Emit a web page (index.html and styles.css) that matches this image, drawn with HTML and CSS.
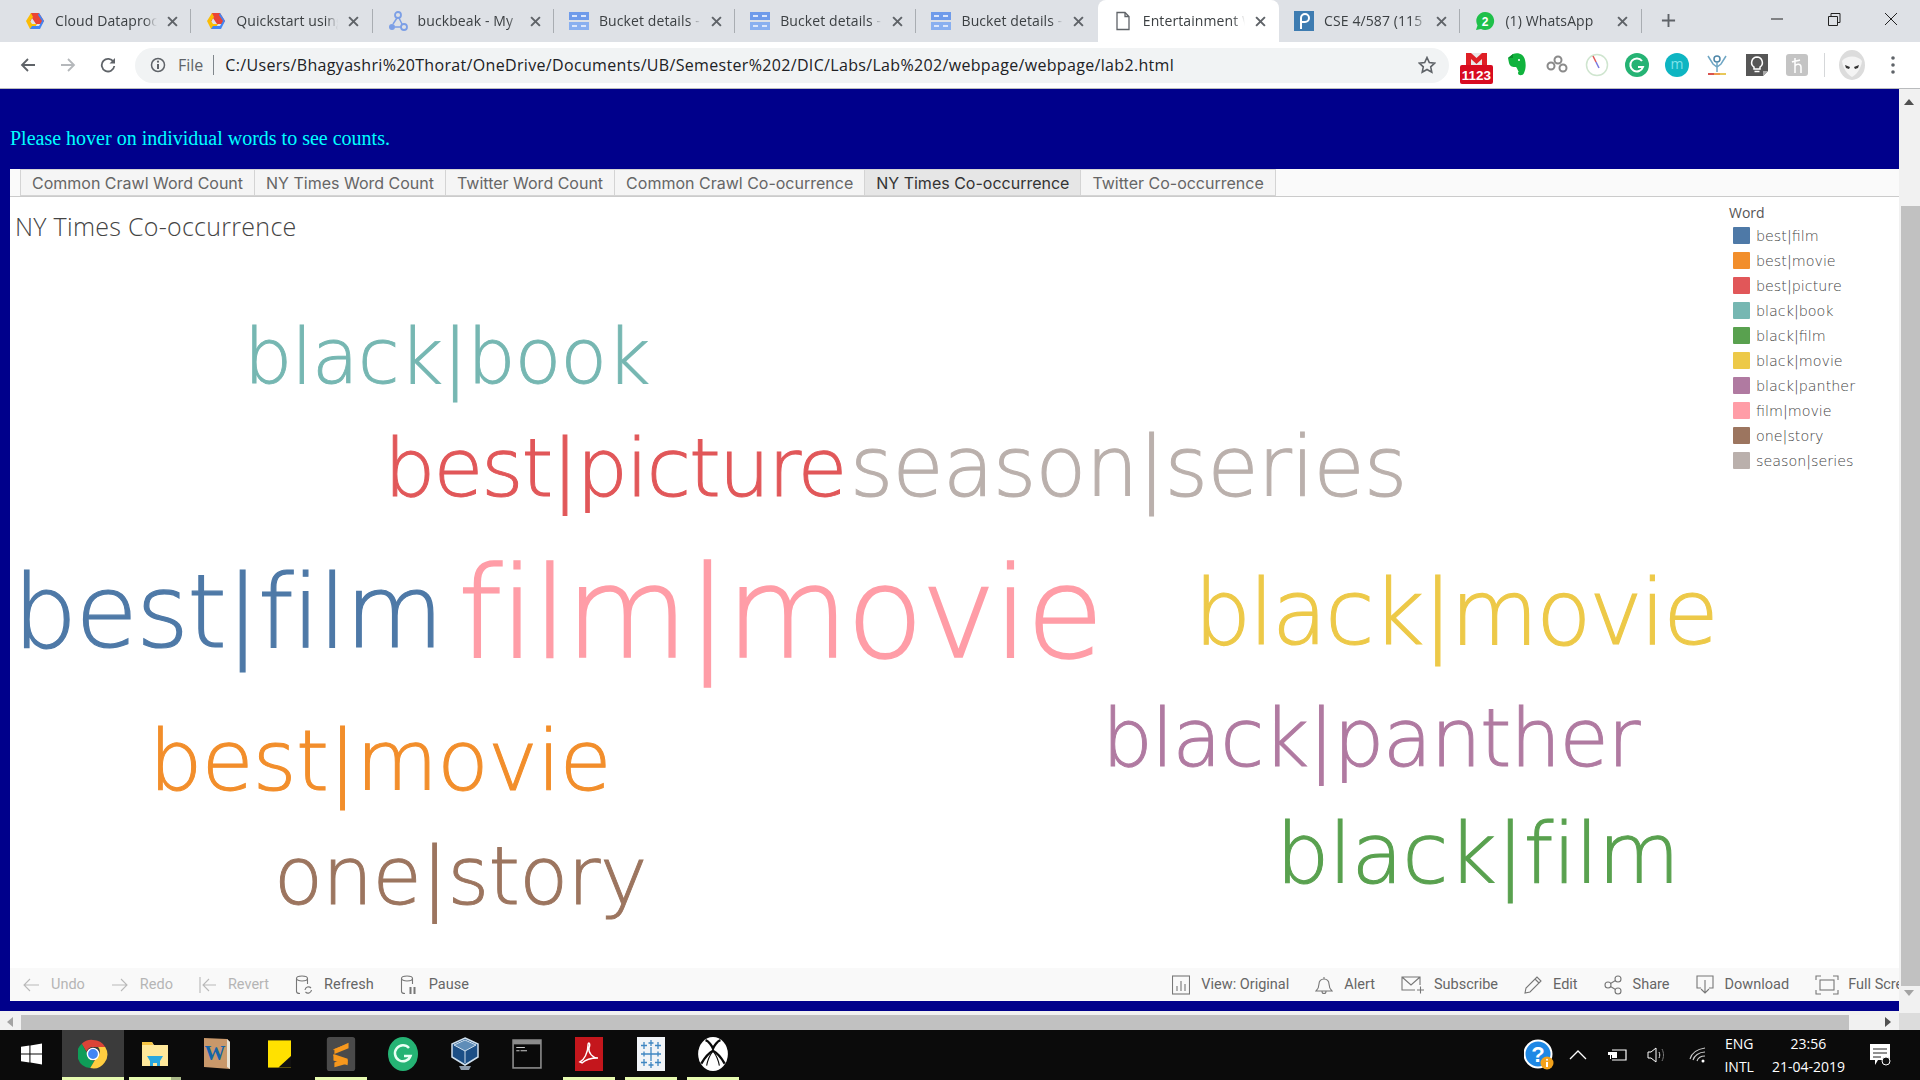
FILE: index.html
```html
<!DOCTYPE html>
<html lang="en">
<head>
    <meta charset="UTF-8">
    <title>Entertainment Word Counts</title>
    <link rel="stylesheet" href="styles.css">
</head>
<body>
    <svg class="defs" width="0" height="0">
        <symbol id="gcloud" viewBox="0 0 20 20">
            <path d="M6 2h8l5 8-2 3H11L7 7l-3 6-1 0z" fill="#ea4335"/>
            <path d="M6 2 1 10l4 8h4l3-5H7L5 10l3-4z" fill="#fbbc05"/>
            <path d="M14 2l5 8-4 8H5l2-3h7l3-5-4-6z" fill="#4285f4"/>
        </symbol>
        <symbol id="bucket" viewBox="0 0 20 20">
            <rect x="0" y="1" width="20" height="8" fill="#6f9bea"/>
            <rect x="0" y="11" width="20" height="8" fill="#8ab0f0"/>
            <rect x="3" y="4" width="5" height="2" fill="#dbe6fb"/>
            <rect x="12" y="4" width="5" height="2" fill="#dbe6fb"/>
            <rect x="3" y="14" width="5" height="2" fill="#dbe6fb"/>
            <rect x="12" y="14" width="5" height="2" fill="#dbe6fb"/>
        </symbol>
        <symbol id="close" viewBox="0 0 10 10">
            <path d="M1 1l8 8M9 1l-8 8" stroke="#5f6368" stroke-width="1.8" fill="none"/>
        </symbol>
    </svg>

    <div class="tabstrip">
        <div class="tab">
            <svg class="favicon"><use href="#gcloud"/></svg>
            <span class="tab-title">Cloud Dataproc</span>
            <svg class="tab-close"><use href="#close"/></svg>
        </div>
        <div class="tab">
            <svg class="favicon"><use href="#gcloud"/></svg>
            <span class="tab-title">Quickstart using</span>
            <svg class="tab-close"><use href="#close"/></svg>
        </div>
        <div class="tab">
            <svg class="favicon" viewBox="0 0 20 20">
                <circle cx="10" cy="4" r="3" fill="none" stroke="#7c9fe6" stroke-width="1.8"/>
                <circle cx="4" cy="16" r="3" fill="#7c9fe6"/>
                <circle cx="16" cy="16" r="3" fill="none" stroke="#7c9fe6" stroke-width="1.8"/>
                <path d="M9 7l-4 6M11 7l3 6M7 16h6" stroke="#7c9fe6" stroke-width="1.5"/>
            </svg>
            <span class="tab-title">buckbeak - My</span>
            <svg class="tab-close"><use href="#close"/></svg>
        </div>
        <div class="tab">
            <svg class="favicon"><use href="#bucket"/></svg>
            <span class="tab-title">Bucket details -</span>
            <svg class="tab-close"><use href="#close"/></svg>
        </div>
        <div class="tab">
            <svg class="favicon"><use href="#bucket"/></svg>
            <span class="tab-title">Bucket details -</span>
            <svg class="tab-close"><use href="#close"/></svg>
        </div>
        <div class="tab tab-plain">
            <svg class="favicon"><use href="#bucket"/></svg>
            <span class="tab-title">Bucket details -</span>
            <svg class="tab-close"><use href="#close"/></svg>
        </div>
        <div class="tab tab-plain tab-active">
            <svg class="favicon" viewBox="0 0 20 20">
                <path d="M4 1.5h8l4 4v13H4z M12 1.5v4h4" fill="#fff" stroke="#5f6368" stroke-width="1.3"/>
            </svg>
            <span class="tab-title">Entertainment Word</span>
            <svg class="tab-close"><use href="#close"/></svg>
        </div>
        <div class="tab">
            <svg class="favicon" viewBox="0 0 20 20">
                <rect width="20" height="20" fill="#3e7cb1"/>
                <path d="M7 18V7a4 4 0 1 1 4 4H7" fill="none" stroke="#fff" stroke-width="2"/>
            </svg>
            <span class="tab-title">CSE 4/587 (115</span>
            <svg class="tab-close"><use href="#close"/></svg>
        </div>
        <div class="tab">
            <svg class="favicon" viewBox="0 0 20 20">
                <path d="M10 1a9 9 0 1 1-4 17l-5 1 1.500-4.500A9 9 0 0 1 10 1z" fill="#1fc04a"/>
                <text x="10" y="14.500" class="fav-num">2</text>
            </svg>
            <span class="tab-title">(1) WhatsApp</span>
            <svg class="tab-close"><use href="#close"/></svg>
        </div>
        <svg class="newtab" viewBox="0 0 16 16"><path d="M8 1v14M1 8h14" stroke="#5f6368" stroke-width="2"/></svg>
        <div class="winbtns">
            <svg viewBox="0 0 14 14"><path d="M1 7h12" stroke="#222" fill="none"/></svg>
            <svg viewBox="0 0 14 14"><path d="M1.500 4.500h9v9h-9zM4 4.500v-3h9v9h-2.500" stroke="#222" fill="none"/></svg>
            <svg viewBox="0 0 14 14"><path d="M1 1l12 12M13 1l-12 12" stroke="#222" fill="none"/></svg>
        </div>
    </div>

    <div class="toolbar">
        <svg class="nav-icon" viewBox="0 0 16 16"><path d="M15 8H2M8 2 2 8l6 6" fill="none" stroke="#5f6368" stroke-width="1.8"/></svg>
        <svg class="nav-icon nav-forward" viewBox="0 0 16 16"><path d="M1 8h13M8 2l6 6-6 6" fill="none" stroke="#b5b8bb" stroke-width="1.8"/></svg>
        <svg class="nav-icon nav-reload" viewBox="0 0 16 16"><path d="M13.500 5A6.300 6.300 0 1 0 14.300 9" fill="none" stroke="#5f6368" stroke-width="1.8"/><path d="M15 1v5.500H9.500z" fill="#5f6368"/></svg>
        <div class="omnibox">
            <svg class="info" viewBox="0 0 16 16"><circle cx="8" cy="8" r="6.500" fill="none" stroke="#5f6368" stroke-width="1.500"/><path d="M8 7v5" stroke="#5f6368" stroke-width="2"/><circle cx="8" cy="4.700" r="1.100" fill="#5f6368"/></svg>
            <span class="scheme">File</span>
            <span class="omni-sep"></span>
            <span class="url">C:/Users/Bhagyashri%20Thorat/OneDrive/Documents/UB/Semester%202/DIC/Labs/Lab%202/webpage/webpage/lab2.html</span>
            <svg class="star" viewBox="0 0 18 18"><path d="M9 1.500l2.300 5 5.400.6-4 3.700 1.100 5.400L9 13.500l-4.800 2.700 1.100-5.400-4-3.700 5.400-.6z" fill="none" stroke="#5f6368" stroke-width="1.600"/></svg>
        </div>
        <div class="extensions">
            <svg class="ext ext-gmail" viewBox="0 0 33 32">
                <path d="M7 1h19v12H7z" fill="#e8e8e8"/>
                <path d="M6 1h5l5.500 5L22 1h5v12h-5V7l-5.500 5L11 7v6H6z" fill="#df1f26"/>
                <rect y="13" width="33" height="19" rx="2" fill="#d80b20"/>
                <text x="16.500" y="28" class="ext-count">1123</text>
            </svg>
            <svg class="ext" viewBox="0 0 24 24">
                <path d="M3 5l5-4c6-2 11 1 12 6 1 4 1 9-1 13-1 3-6 3-6 0 0-2 3-2 3 0-3 0-3-4-5-6-3 0-6 0-7-4z" fill="#10b33d"/>
                <path d="M3 5h5V1z" fill="#0b8a2e"/>
                <circle cx="14" cy="7" r="1" fill="#fff"/>
            </svg>
            <svg class="ext" viewBox="0 0 24 24" fill="none" stroke="#8a8a8a" stroke-width="2">
                <circle cx="13" cy="7" r="3.500"/><circle cx="6" cy="13" r="3.500"/><circle cx="18" cy="15" r="3.500"/>
            </svg>
            <svg class="ext" viewBox="0 0 24 24" fill="none">
                <circle cx="12" cy="12" r="10.500" stroke="#cfe5cf" stroke-width="1.500"/>
                <path d="M8 3l3 6" stroke="#e05a5a" stroke-width="1.500"/><path d="M11 9l3 6" stroke="#7a7ae0" stroke-width="1.500"/>
            </svg>
            <svg class="ext" viewBox="0 0 24 24">
                <circle cx="12" cy="12" r="12" fill="#25b374"/>
                <path d="M17 8a6.500 6.500 0 1 0 1 6h-5" fill="none" stroke="#fff" stroke-width="2"/>
            </svg>
            <svg class="ext" viewBox="0 0 24 24">
                <circle cx="12" cy="12" r="12" fill="#0eb5c2"/>
                <text x="12" y="16" class="ext-m">m</text>
            </svg>
            <svg class="ext" viewBox="0 0 24 24" fill="none">
                <circle cx="12" cy="6" r="3" stroke="#4d86a8" stroke-width="1.500"/>
                <path d="M12 9v10M3 3l5 8 4 3 4-3 5-8" stroke="#6fa6c4" stroke-width="1.500"/>
                <path d="M3 21h6" stroke="#d9534f" stroke-width="2"/><path d="M9 21h6" stroke="#ee9a4d" stroke-width="2"/><path d="M15 21h6" stroke="#e8c85a" stroke-width="2"/>
            </svg>
            <svg class="ext" viewBox="0 0 24 24">
                <path d="M1 1h22v17l-5 5H1z" fill="#565656"/>
                <path d="M18 23v-5h5z" fill="#aaa"/>
                <path d="M12 4a5.500 5.500 0 0 0-3 10v2h6v-2a5.500 5.500 0 0 0-3-10z" fill="none" stroke="#fff" stroke-width="1.500"/>
                <path d="M9.500 18.500h5" stroke="#fff" stroke-width="1.500"/>
            </svg>
            <svg class="ext" viewBox="0 0 24 24">
                <rect x="1" y="1" width="22" height="22" rx="3" fill="#c4c4c4"/>
                <path d="M10 5v15M10 13c2-3 6-2 6 1v6M7 9c2-1 5-1 8-2" fill="none" stroke="#fff" stroke-width="1.500"/>
            </svg>
            <span class="ext-sep"></span>
            <svg class="avatar" viewBox="0 0 26 30">
                <ellipse cx="13" cy="15" rx="13" ry="15" fill="#dcdcdc"/>
                <path d="M3 11c4-6 16-6 20 0-1 8-6 14-10 16C9 25 4 19 3 11z" fill="#f4f4f4"/>
                <path d="M6 15l5 2-1 2-3-1zM20 15l-5 2 1 2 3-1z" fill="#333"/>
            </svg>
            <svg class="menu-dots" viewBox="0 0 4 18"><circle cx="2" cy="2" r="1.800" fill="#5f6368"/><circle cx="2" cy="9" r="1.800" fill="#5f6368"/><circle cx="2" cy="16" r="1.800" fill="#5f6368"/></svg>
        </div>
    </div>

    <div class="window">
        <div class="page-row">
            <main class="page">
                <p class="hint">Please hover on individual words to see counts.</p>
                <div class="viz">
                    <div class="sheet-tabs">
                        <span class="sheet-tab">Common Crawl Word Count</span>
                        <span class="sheet-tab">NY Times Word Count</span>
                        <span class="sheet-tab">Twitter Word Count</span>
                        <span class="sheet-tab">Common Crawl Co-ocurrence</span>
                        <span class="sheet-tab sheet-tab-on">NY Times Co-occurrence</span>
                        <span class="sheet-tab">Twitter Co-occurrence</span>
                    </div>
                    <div class="viz-body">
                        <div class="canvas">
                            <h2 class="viz-title">NY Times Co-occurrence</h2>
                            <span class="word w-black-book">black|book</span>
                            <span class="word w-best-picture">best|picture</span>
                            <span class="word w-season-series">season|series</span>
                            <span class="word w-best-film">best|film</span>
                            <span class="word w-film-movie">film|movie</span>
                            <span class="word w-black-movie">black|movie</span>
                            <span class="word w-best-movie">best|movie</span>
                            <span class="word w-black-panther">black|panther</span>
                            <span class="word w-one-story">one|story</span>
                            <span class="word w-black-film">black|film</span>
                        </div>
                        <aside class="legend">
                            <div class="legend-title">Word</div>
                            <div class="legend-row"><span class="swatch c1"></span>best|film</div>
                            <div class="legend-row"><span class="swatch c2"></span>best|movie</div>
                            <div class="legend-row"><span class="swatch c3"></span>best|picture</div>
                            <div class="legend-row"><span class="swatch c4"></span>black|book</div>
                            <div class="legend-row"><span class="swatch c5"></span>black|film</div>
                            <div class="legend-row"><span class="swatch c6"></span>black|movie</div>
                            <div class="legend-row"><span class="swatch c7"></span>black|panther</div>
                            <div class="legend-row"><span class="swatch c8"></span>film|movie</div>
                            <div class="legend-row"><span class="swatch c9"></span>one|story</div>
                            <div class="legend-row"><span class="swatch c10"></span>season|series</div>
                        </aside>
                    </div>
                    <div class="viz-toolbar">
                        <span class="tb-item tb-off">
                            <svg viewBox="0 0 18 18"><path d="M17 9H2M8 3 2 9l6 6" /></svg>Undo
                        </span>
                        <span class="tb-item tb-off">
                            <svg viewBox="0 0 18 18"><path d="M1 9h15M10 3l6 6-6 6" /></svg>Redo
                        </span>
                        <span class="tb-item tb-off">
                            <svg viewBox="0 0 18 18"><path d="M1 1v16M17 9H4M10 3 4 9l6 6" /></svg>Revert
                        </span>
                        <span class="tb-item">
                            <svg viewBox="0 0 18 20"><ellipse cx="7" cy="3.500" rx="5.500" ry="2.500"/><path d="M1.500 3.500v13c0 1 1.500 2 3.500 2M12.500 3.500V9"/><path d="M10 15a3.500 3.500 0 0 1 6-2M16.500 15a3.500 3.500 0 0 1-6 2"/></svg>Refresh
                        </span>
                        <span class="tb-item">
                            <svg viewBox="0 0 18 20"><ellipse cx="7" cy="3.500" rx="5.500" ry="2.500"/><path d="M1.500 3.500v13c0 1 1.500 2 3.500 2M12.500 3.500V9"/><path d="M10.500 12v7M14.500 12v7" stroke-width="2"/></svg>Pause
                        </span>
                        <span class="tb-spacer"></span>
                        <span class="tb-item">
                            <svg viewBox="0 0 18 20"><rect x="0.500" y="1" width="17" height="18"/><path d="M5 16v-5M9 16V6M13 16V9"/></svg>View: Original
                        </span>
                        <span class="tb-item">
                            <svg viewBox="0 0 18 20"><path d="M1 16c2-2 3-3 3-7 0-3 2-5 5-5s5 2 5 5c0 4 1 5 3 7zM7 16.500a2 2 0 0 0 4 0M9 4V2"/></svg>Alert
                        </span>
                        <span class="tb-item tb-wide">
                            <svg viewBox="0 0 24 20"><path d="M14 15H1V2h18v8M1 2l9 8 9-8M16 15h7M19.500 11.500v7" /></svg>Subscribe
                        </span>
                        <span class="tb-item">
                            <svg viewBox="0 0 18 20"><path d="M1 18l1-5L13 2l4 4L6 17zM11 4l4 4"/></svg>Edit
                        </span>
                        <span class="tb-item">
                            <svg viewBox="0 0 18 20"><circle cx="4" cy="10" r="3"/><circle cx="14" cy="4" r="3"/><circle cx="14" cy="16" r="3"/><path d="M6.500 8.500l5-3M6.500 11.500l5 3"/></svg>Share
                        </span>
                        <span class="tb-item">
                            <svg viewBox="0 0 18 20"><path d="M5 13H1V1h16v12h-4M9 5v13M5 14l4 4 4-4"/></svg>Download
                        </span>
                        <span class="tb-item tb-wide tb-last">
                            <svg viewBox="0 0 24 20"><rect x="5" y="5" width="14" height="10"/><path d="M1 5V1h5M18 1h5v4M1 15v4h5M18 19h5v-4"/></svg>Full Screen
                        </span>
                    </div>
                </div>
            </main>
            <div class="vscroll">
                <span class="arrow-up"></span>
                <div class="vthumb"></div>
                <span class="arrow-down"></span>
            </div>
        </div>
        <div class="hscroll">
            <span class="arrow-left"></span>
            <div class="hthumb"></div>
            <span class="arrow-right"></span>
            <span class="corner"></span>
        </div>
    </div>

    <footer class="taskbar">
        <div class="task-cell">
            <svg class="task-icon task-win" viewBox="0 0 20 20"><path d="M0 3l8-1v7.500H0zM9 1.800 20 0v9.500H9zM0 10.500h8V18l-8-1zM9 10.500h11V20L9 18.200z" fill="#fff"/></svg>
        </div>
        <div class="task-cell task-on">
            <svg class="task-icon" viewBox="0 0 32 32">
                <path d="M16 1a15 15 0 0 1 13 7.500H16a7.500 7.500 0 0 0-7 5L4 5a15 15 0 0 1 12-4z" fill="#db4437"/>
                <path d="M4 5l6.500 11.500a7.500 7.500 0 0 0 7 7L13 31A15 15 0 0 1 4 5z" fill="#0f9d58"/>
                <path d="M29 8.500A15 15 0 0 1 13 31l6.500-11a7.500 7.500 0 0 0 2-11.500z" fill="#ffcd40"/>
                <circle cx="16" cy="16" r="6" fill="#4285f4" stroke="#fff" stroke-width="1.500"/>
            </svg>
        </div>
        <div class="task-cell run run-stack">
            <svg class="task-icon" viewBox="0 0 30 30">
                <path d="M2 3h10l2 3h14v21H2z" fill="#ffe89a"/>
                <path d="M2 3h10l1 3H2z" fill="#f6c544"/>
                <path d="M10 21h10v6h-3v-3h-4v3h-3z" fill="#29a8e0"/><path d="M7 17h16l-3 5H10z" fill="#29a8e0"/>
            </svg>
        </div>
        <div class="task-cell">
            <svg class="task-icon" viewBox="0 0 30 34">
                <path d="M2 1l23 1 3 3v27L2 30z" fill="#c9986a"/>
                <path d="M25 2l3 3v27l-3-2z" fill="#e8e2d2"/>
                <text x="13" y="23" class="task-w">W</text>
            </svg>
        </div>
        <div class="task-cell">
            <svg class="task-icon task-note" viewBox="0 0 22 26">
                <rect width="22" height="26" fill="#ffe100"/>
                <path d="M22 15v11H10z" fill="#111"/>
            </svg>
        </div>
        <div class="task-cell run">
            <svg class="task-icon" viewBox="0 0 30 36">
                <rect width="30" height="36" rx="3" fill="#4a4a4a"/>
                <path d="M23 7 7 13v5l15 5v5L8 32l0-5 8-3-9-4v-6l16-7z" fill="#f7981d"/>
                <path d="M23 6v6L8 18v-5zM7 19l15 5v6L7 25z" fill="#f7981d"/>
            </svg>
        </div>
        <div class="task-cell">
            <svg class="task-icon" viewBox="0 0 30 34">
                <ellipse cx="15" cy="17" rx="15" ry="17" fill="#25b374"/>
                <path d="M21 11a8 8 0 1 0 1.500 8H16" fill="none" stroke="#e9fff4" stroke-width="2.500"/>
            </svg>
        </div>
        <div class="task-cell">
            <svg class="task-icon" viewBox="0 0 28 34">
                <path d="M14 1l13 6v13l-13 8L1 20V7z" fill="#1c4f86" stroke="#cfe0ee" stroke-width="1.500"/>
                <path d="M14 14 3 8l11-5 11 5zM14 14v12" fill="#5f8db8" stroke="#cfe0ee"/>
                <path d="M8 29h12l-2 4h-8z" fill="#8d9bab"/>
            </svg>
        </div>
        <div class="task-cell">
            <svg class="task-icon" viewBox="0 0 28 28">
                <rect x="1" y="1" width="26" height="26" fill="#0a0a0a" stroke="#8c8c8c" stroke-width="1.500"/>
                <rect x="1" y="1" width="26" height="4" fill="#8c8c8c"/>
                <path d="M4 8h8M4 11h3M8 11h6" stroke="#ccc"/>
            </svg>
        </div>
        <div class="task-cell run">
            <svg class="task-icon" viewBox="0 0 28 34">
                <rect width="28" height="34" fill="#c4161c"/>
                <path d="M5 25c4-2 8-9 8-17 0-4 3-2 1 3-1 5 4 10 9 10-5 0-12 1-16 5z" fill="none" stroke="#fff" stroke-width="1.400"/>
            </svg>
        </div>
        <div class="task-cell run">
            <svg class="task-icon task-tableau" viewBox="0 0 28 34">
                <rect width="28" height="34" fill="#f1f4f7"/>
                <path d="M14 10v14M8 17h12M14 3v6M11.500 6h5M14 25v6M11.500 28h5M4 17h6M18 17h6M7 14.500v5M21 14.500v5M7 5v7M4 8.500h6M21 5v7M18 8.500h6M7 22v7M4 25.500h6M21 22v7M18 25.500h6" stroke="#3f87c2" stroke-width="1.300" fill="none"/>
            </svg>
        </div>
        <div class="task-cell run">
            <svg class="task-icon" viewBox="0 0 28 32">
                <ellipse cx="14" cy="16" rx="14" ry="16" fill="#fff"/>
                <path d="M7 3c3 1 6 5 7 8 1-3 4-7 7-8M3 25c3-5 7-10 11-12 4 2 8 7 11 12" fill="none" stroke="#0a0a0a" stroke-width="2.200"/>
                <path d="M14 13c-3 4-5 8-6 14M14 13c3 4 5 8 6 14" fill="none" stroke="#0a0a0a" stroke-width="1"/>
            </svg>
        </div>
        <div class="tray">
            <svg class="tray-help" viewBox="0 0 30 32">
                <circle cx="14" cy="15" r="13.500" fill="#1e88e5" stroke="#fff" stroke-width="2"/>
                <text x="14" y="23" class="tray-q">?</text>
                <circle cx="23" cy="24" r="6.500" fill="#f3a21b"/>
                <path d="M23 23v5" stroke="#fff" stroke-width="2"/><circle cx="23" cy="20.800" r="1" fill="#fff"/>
            </svg>
            <svg class="tray-chev" viewBox="0 0 18 10"><path d="M1 9l8-8 8 8" fill="none" stroke="#fff" stroke-width="1.300"/></svg>
            <svg class="tray-batt" viewBox="0 0 20 14"><path d="M5 2h14v10H5" fill="none" stroke="#fff" stroke-width="1.200"/><rect x="5" y="4" width="5" height="6" fill="#fff"/><path d="M1 4h5v3H4v4H3V7H1z" fill="#fff"/></svg>
            <svg class="tray-sound" viewBox="0 0 20 18"><path d="M1 6h3l5-4v14l-5-4H1z" fill="none" stroke="#fff"/><path d="M12 6c1 2 1 4 0 6" stroke="#ddd" fill="none"/><path d="M15 3c2 4 2 8 0 12" stroke="#777" fill="none"/></svg>
            <svg class="tray-wifi" viewBox="0 0 18 18"><path d="M1 13C3 6 9 3 16 2M4 14c1-4 6-8 12-8M8 15c1-3 4-5 8-5" fill="none" stroke="#ccc" stroke-width="1.100"/><circle cx="14" cy="15" r="1.500" fill="#fff"/></svg>
            <div class="tray-lang"><span>ENG</span><span>INTL</span></div>
            <div class="tray-clock"><span>23:56</span><span>21-04-2019</span></div>
            <svg class="tray-notify" viewBox="0 0 22 24"><path d="M1 1h20v16H9l-3 5v-5H1z" fill="#fff"/><path d="M4 6h14M4 10h14M4 14h8" stroke="#222"/><circle cx="17" cy="18" r="4" fill="#111" stroke="#fff"/></svg>
        </div>
    </footer>
</body>
</html>
```

FILE: styles.css
```css
* {
    box-sizing: border-box;
}

html, body {
    height: 100%;
}

body {
    margin: 0;
    width: 1920px;
    height: 1080px;
    overflow: hidden;
    display: flex;
    flex-direction: column;
    font-family: "Open Sans", sans-serif;
    background-color: #fff;
}

.defs {
    position: absolute;
}

/* browser tabs */
.tabstrip {
    height: 42px;
    flex: none;
    display: flex;
    align-items: flex-start;
    background-color: #dee1e6;
    padding-left: 10px;
}

.tab {
    width: 181.300px;
    height: 42px;
    padding: 9px 12px 0 15px;
    display: flex;
    align-items: flex-start;
    position: relative;
}

.tab::after {
    content: "";
    position: absolute;
    top: 9px;
    right: 0;
    width: 1px;
    height: 24px;
    background-color: #a9adb2;
}

.tab-plain::after {
    display: none;
}

.tab-active {
    background-color: #fff;
    border-radius: 8px 8px 0 0;
}

.favicon {
    width: 20px;
    height: 20px;
    flex: none;
    margin-top: 2px;
}

.tab-title {
    margin-left: 10px;
    width: 102px;
    flex: none;
    overflow: hidden;
    white-space: nowrap;
    font-size: 14px;
    line-height: 24px;
    letter-spacing: 0.1px;
    color: #3c4043;
    -webkit-mask-image: linear-gradient(to right, #000 88%, transparent 100%);
    mask-image: linear-gradient(to right, #000 88%, transparent 100%);
}

.tab-close {
    width: 11px;
    height: 11px;
    flex: none;
    margin: 7px 0 0 10px;
}

.newtab {
    width: 15px;
    height: 15px;
    margin: 13px 0 0 19px;
    flex: none;
}

.winbtns {
    margin-left: auto;
    display: flex;
    gap: 43px;
    padding: 12px 22px 0 0;
}

.winbtns svg {
    width: 14px;
    height: 14px;
}

/* address bar */
.toolbar {
    height: 47px;
    flex: none;
    display: flex;
    align-items: center;
    padding-left: 20px;
    background-color: #fff;
    border-bottom: 1px solid #b9bbbd;
}

.nav-icon {
    width: 16px;
    height: 16px;
    flex: none;
    margin-right: 24px;
}

.nav-reload {
    margin-right: 19px;
}

.omnibox {
    width: 1314px;
    height: 35px;
    flex: none;
    display: flex;
    align-items: center;
    padding: 0 13px 0 15px;
    border-radius: 18px;
    background-color: #f1f3f4;
}

.info {
    width: 16px;
    height: 16px;
    flex: none;
}

.scheme {
    margin-left: 12px;
    font-size: 16px;
    color: #5f6368;
}

.omni-sep {
    width: 1px;
    height: 20px;
    margin: 0 11px 0 10px;
    background-color: #80868b;
}

.url {
    font-size: 16px;
    white-space: nowrap;
    letter-spacing: 0.33px;
    color: #202124;
}

.star {
    width: 18px;
    height: 18px;
    margin-left: auto;
}

.extensions {
    display: flex;
    align-items: center;
    flex: none;
    padding-left: 11px;
}

.ext {
    width: 24px;
    height: 24px;
    margin-right: 16px;
    flex: none;
}

.ext-gmail {
    width: 33px;
    height: 32px;
    margin-top: 5px;
    margin-right: 12px;
}

.ext-count {
    font-family: "Liberation Sans", sans-serif;
    font-size: 13.500px;
    font-weight: 700;
    fill: #fff;
    text-anchor: middle;
}

.ext-m {
    font-family: "Open Sans", sans-serif;
    font-size: 14px;
    fill: #7fe3ea;
    text-anchor: middle;
}

.fav-num {
    font-family: "Liberation Sans", sans-serif;
    font-size: 12px;
    font-weight: 700;
    fill: #fff;
    text-anchor: middle;
}

.ext-sep {
    width: 1px;
    height: 24px;
    margin: 0 14px 0 -1px;
    background-color: #d5d7d9;
}

.avatar {
    width: 26px;
    height: 30px;
    flex: none;
    margin-right: 26px;
}

.menu-dots {
    width: 4px;
    height: 18px;
    flex: none;
}

/* page */
.window {
    flex: 1;
    min-height: 0;
    display: flex;
    flex-direction: column;
}

.page-row {
    flex: 1;
    min-height: 0;
    display: flex;
}

.page {
    width: 1899px;
    flex: none;
    overflow: hidden;
    padding: 0 0 10px 10px;
    background-color: #00008b;
    border-bottom: 2px solid #f1f1f1;
}

.hint {
    height: 80px;
    margin: 0;
    padding-top: 38px;
    font-family: "Liberation Serif", serif;
    font-size: 20px;
    line-height: 23px;
    color: #00ffff;
}

.viz {
    width: 1930px;
    height: 832px;
    display: flex;
    flex-direction: column;
    background-color: #fff;
}

.sheet-tabs {
    height: 28px;
    flex: none;
    display: flex;
    padding-left: 10px;
    background-color: #fafafa;
    border-bottom: 1px solid #cbcbcb;
}

.sheet-tab {
    height: 27px;
    padding: 0 11px;
    border: 1px solid #d4d4d4;
    border-left: 0;
    font-family: Inter, sans-serif;
    font-size: 16px;
    line-height: 26px;
    white-space: nowrap;
    color: #666;
    background-color: #f5f5f5;
}

.sheet-tab:first-child {
    border-left: 1px solid #d4d4d4;
}

.sheet-tab-on {
    background-color: #e6e6e6;
    color: #333;
}

.viz-body {
    flex: 1;
    min-height: 0;
    display: flex;
}

.canvas {
    width: 1719px;
    flex: none;
    position: relative;
    font-family: "DejaVu Sans", sans-serif;
    font-weight: 200;
}

.viz-title {
    margin: 0;
    padding: 14px 0 0 5px;
    font-family: "Open Sans", sans-serif;
    font-size: 25px;
    font-weight: 300;
    line-height: 30px;
    letter-spacing: 0.28px;
    color: #444;
}

/* the place of each word is the word cloud's own layout */
.word {
    position: absolute;
    line-height: 1;
    white-space: nowrap;
    -webkit-text-stroke: 0.012em currentColor;
}

.w-black-book { left: 234px; top: 122px; font-size: 76px; letter-spacing: -0.7px; color: #76b7b2; }
.w-best-picture { left: 374px; top: 231px; font-size: 81px; letter-spacing: -2px; color: #e15759; }
.w-season-series { left: 840px; top: 229px; font-size: 83px; letter-spacing: -0.7px; color: #bab0ac; }
.w-best-film { left: 3px; top: 365px; font-size: 101px; letter-spacing: -1.5px; color: #4e79a7; }
.w-film-movie { left: 448px; top: 354px; font-size: 126px; letter-spacing: -2.3px; color: #ff9da7; }
.w-black-movie { left: 1184px; top: 371px; font-size: 90px; letter-spacing: -2.1px; color: #edc948; }
.w-best-movie { left: 139px; top: 522px; font-size: 84px; letter-spacing: -0.6px; color: #f28e2b; }
.w-black-panther { left: 1092px; top: 502px; font-size: 80px; letter-spacing: -1.3px; color: #b07aa1; }
.w-one-story { left: 264px; top: 640px; font-size: 80px; letter-spacing: -0.6px; color: #9c755f; }
.w-black-film { left: 1266px; top: 615px; font-size: 84px; letter-spacing: -0.6px; color: #59a14f; }

.legend {
    flex: 1;
    padding-top: 6px;
    color: #444;
}

.legend-title {
    font-size: 14px;
    font-weight: 500;
    line-height: 20px;
    color: #555;
}

.legend-row {
    height: 25px;
    display: flex;
    align-items: center;
    padding-left: 4px;
    font-family: "DejaVu Sans", sans-serif;
    font-size: 14.300px;
    font-weight: 200;
}

.swatch {
    width: 17px;
    height: 17px;
    margin-right: 6px;
    border-radius: 1px;
}

.c1 { background-color: #4e79a7; }
.c2 { background-color: #f28e2b; }
.c3 { background-color: #e15759; }
.c4 { background-color: #76b7b2; }
.c5 { background-color: #59a14f; }
.c6 { background-color: #edc948; }
.c7 { background-color: #b07aa1; }
.c8 { background-color: #ff9da7; }
.c9 { background-color: #9c755f; }
.c10 { background-color: #bab0ac; }

/* tableau toolbar */
.viz-toolbar {
    height: 33px;
    flex: none;
    display: flex;
    align-items: center;
    padding: 0 21px 0 12px;
    background-color: #f9f9f9;
    font-family: Roboto, sans-serif;
    font-size: 14.500px;
    color: #666;
}

.tb-item {
    display: flex;
    align-items: center;
    gap: 11px;
    margin-right: 26px;
    white-space: nowrap;
}

.tb-item svg {
    width: 18px;
    height: 20px;
    flex: none;
    fill: none;
    stroke: #777;
    stroke-width: 1.100;
}

.tb-wide {
    gap: 9px;
}

.tb-wide svg {
    width: 24px;
}

.tb-off {
    color: #b5b5b5;
}

.tb-off svg {
    stroke: #b9b9b9;
}

.tb-spacer {
    flex: 1;
}

.tb-last {
    margin-right: 0;
}

/* scrollbars */
.vscroll {
    width: 21px;
    flex: none;
    position: relative;
    background-color: #f1f1f1;
}

.vthumb {
    position: absolute;
    top: 117px;
    left: 2px;
    right: 0;
    height: 780px;
    background-color: #c1c1c1;
}

.arrow-up, .arrow-down, .arrow-left, .arrow-right {
    position: absolute;
    width: 0;
    height: 0;
    border-style: solid;
    border-color: transparent;
}

.arrow-up {
    top: 10px;
    left: 5px;
    border-width: 0 5px 6px;
    border-bottom-color: #505050;
}

.arrow-down {
    bottom: 17px;
    left: 5px;
    border-width: 6px 5px 0;
    border-top-color: #a3a3a3;
}

.hscroll {
    height: 17px;
    flex: none;
    position: relative;
    background-color: #f1f1f1;
}

.hthumb {
    position: absolute;
    top: 2px;
    left: 21px;
    bottom: 0;
    width: 1828px;
    background-color: #c1c1c1;
}

.arrow-left {
    top: 4px;
    left: 7px;
    border-width: 5px 6px 5px 0;
    border-right-color: #a3a3a3;
}

.arrow-right {
    top: 4px;
    right: 29px;
    border-width: 5px 0 5px 6px;
    border-left-color: #505050;
}

.corner {
    position: absolute;
    top: 0;
    right: 0;
    width: 21px;
    height: 17px;
    background-color: #dcdcdc;
}

/* windows taskbar */
.taskbar {
    height: 50px;
    flex: none;
    display: flex;
    background-color: #0b0b0b;
}

.task-cell {
    width: 62px;
    height: 50px;
    flex: none;
    display: flex;
    align-items: center;
    justify-content: center;
    position: relative;
}

.task-on {
    background-color: #3b3b3b;
    border-bottom: 3px solid #e7fbb0;
}

.run::after {
    content: "";
    position: absolute;
    left: 5px;
    right: 5px;
    bottom: 0;
    height: 3px;
    background-color: #e7fbb0;
}

.run-stack::after {
    background-image: linear-gradient(to right, #e7fbb0 80%, #a9b888 80%);
}

.task-icon {
    width: 30px;
    height: 34px;
    margin-bottom: 2px;
}

.task-on .task-icon {
    margin-bottom: -1px;
}

.task-win {
    width: 21px;
    height: 24px;
}

.task-note {
    width: 23px;
    height: 28px;
}

.task-w {
    font-family: "Liberation Serif", serif;
    font-size: 21px;
    font-weight: 700;
    fill: #1464a8;
    text-anchor: middle;
}

.tray {
    margin-left: auto;
    display: flex;
    align-items: center;
    color: #fff;
    font-size: 14px;
}

.tray-help {
    width: 30px;
    height: 32px;
}

.tray-q {
    font-family: "Liberation Sans", sans-serif;
    font-size: 22px;
    font-weight: 700;
    fill: #fff;
    text-anchor: middle;
}

.tray-chev {
    width: 18px;
    height: 10px;
    margin-left: 15px;
}

.tray-batt {
    width: 20px;
    height: 14px;
    margin-left: 20px;
}

.tray-sound {
    width: 20px;
    height: 18px;
    margin-left: 20px;
}

.tray-wifi {
    width: 18px;
    height: 18px;
    margin-left: 22px;
}

.tray-lang, .tray-clock {
    display: flex;
    flex-direction: column;
    align-items: center;
    gap: 4px;
    line-height: 19px;
}

.tray-lang {
    margin-left: 17px;
}

.tray-clock {
    margin-left: 18px;
}

.tray-notify {
    width: 22px;
    height: 24px;
    margin: 0 29px 0 24px;
}
```
